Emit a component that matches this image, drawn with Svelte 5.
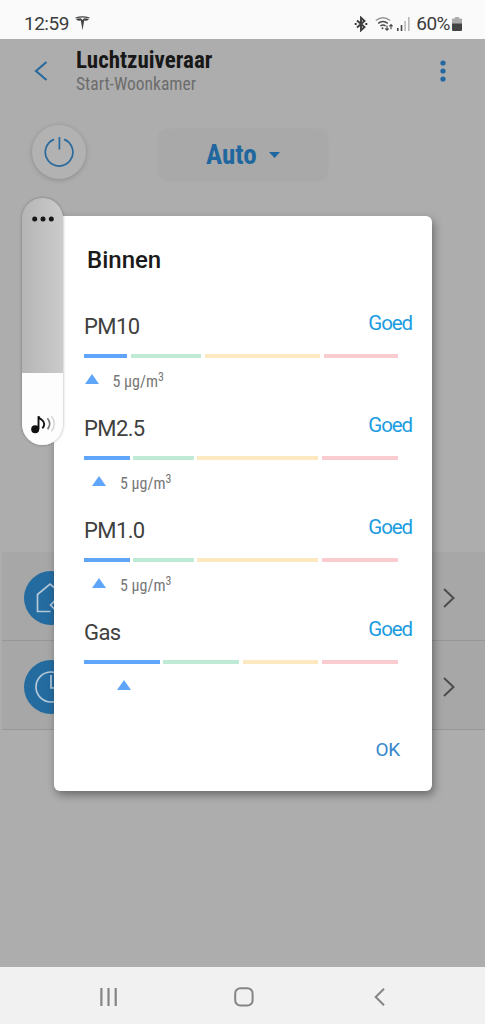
<script lang="ts">
	type Reading = {
		name: string;
		rating: string;
		value: number | null;
		segments: number[];
		marker: number;
	};

	const readings: Reading[] = [
		{ name: 'PM10', rating: 'Goed', value: 5, segments: [43, 70.5, 115.5, 74], marker: 0.5 },
		{ name: 'PM2.5', rating: 'Goed', value: 5, segments: [45.5, 60.5, 121, 76], marker: 8 },
		{ name: 'PM1.0', rating: 'Goed', value: 5, segments: [45.5, 60.5, 121, 76], marker: 8 },
		{ name: 'Gas', rating: 'Goed', value: null, segments: [75.5, 76, 75.5, 76], marker: 32.5 }
	];

	const levels = ['good', 'fair', 'poor', 'bad'];

	let open = $state(true);
</script>

<div class="phone">
	<div class="status-bar">
		<span class="time">12:59</span>
		<svg class="tesla" width="15" height="15" viewBox="0 0 15 15" fill="#444">
			<path d="M.3 1.6Q7.5-1 14.7 1.6L14.2 2.6Q7.5.4.8 2.6Z" />
			<path d="M1.1 3.1Q4 2.1 6.1 2.4L7.5 3.9 8.9 2.4Q11 2.1 13.9 3.1 13 5 10.6 4.7L9.2 4.6 7.5 14.2 5.8 4.6 4.4 4.7Q2 5 1.1 3.1Z" />
		</svg>
		<div class="status-icons">
			<svg width="14" height="16" viewBox="0 0 14 16" fill="none" stroke="#3c3c3c" stroke-width="1.9">
				<path d="M3 4.5 10.5 11 7 14.3V1.7L10.5 5 3 11.5" />
				<path d="M.7 8h2M11.3 8h2" stroke-width="2" />
			</svg>
			<svg width="18" height="16" viewBox="0 0 18 16" fill="none" stroke="#484848" stroke-width="1.5">
				<path d="M.8 4.5Q8 -1 15.2 4.5" stroke="#999" />
				<path d="M3.2 7.4Q8 3.6 12.8 7.4M5.4 10Q8 8 10.6 10" />
				<circle cx="7.5" cy="12.3" r="1" fill="#484848" stroke="none" />
				<path d="M12 9.5V14M10.4 12.5 12 14.2 13.6 12.5M16 13.3V8.8M14.4 10.3 16 8.6 17.6 10.3" stroke-width="1.1" />
			</svg>
			<svg width="13" height="14" viewBox="0 0 13 14">
				<path d="M0 11h1.6v3H0zM3.7 8h1.6v6H3.7z" fill="#444" />
				<path d="M7.3 4h1.6v10H7.3zM11 0h1.6v14H11z" fill="#b8b8b8" />
			</svg>
			<span class="percent">60%</span>
			<svg width="10" height="14" viewBox="0 0 10 14">
				<path d="M3 0h4v1.6h3V7H0V1.6h3z" fill="#ababab" />
				<path d="M0 6.5h10V13q0 1-1 1H1q-1 0-1-1z" fill="#444" />
			</svg>
		</div>
	</div>

	<main class="app">
		<header>
			<svg class="back" width="14" height="20" viewBox="0 0 14 20" fill="none" stroke="#2a6a9c" stroke-width="2.2">
				<path d="M12.5 1 2 10 12.5 19" />
			</svg>
			<div class="heading">
				<h1>Luchtzuiveraar</h1>
				<p>Start-Woonkamer</p>
			</div>
			<svg class="more" width="6" height="22" viewBox="0 0 6 22" fill="#2368a0">
				<circle cx="3" cy="3" r="2.6" />
				<circle cx="3" cy="11" r="2.6" />
				<circle cx="3" cy="19" r="2.6" />
			</svg>
		</header>

		<div class="controls">
			<button class="power" aria-label="power">
				<svg width="30" height="30" viewBox="0 0 30 30" fill="none" stroke="#2a6a9c" stroke-width="1.7">
					<path d="M10.1 2.4A13.8 13.8 0 1 0 20.1 2.4M15.4 0V12.5" />
				</svg>
			</button>
			<button class="mode">
				<span>Auto</span>
				<svg width="11" height="6" viewBox="0 0 11 6"><path d="M0 0H11L5.5 6Z" fill="#20679f" /></svg>
			</button>
		</div>

		<div class="list">
			<div class="item">
				<span class="badge">
					<svg width="32" height="32" viewBox="0 0 32 32" fill="none" stroke="#b4c8d8" stroke-width="1.7">
						<path d="M15.5 29.5H2.5V12.5L15 2 27.5 12.5V17M15.5 23 20 18.5 24.5 23 20 27.5Z" />
					</svg>
				</span>
				<svg class="chevron" width="12" height="20" viewBox="0 0 12 20"><path d="M1 1 10.5 10 1 19" /></svg>
			</div>
			<div class="item">
				<span class="badge">
					<svg width="32" height="32" viewBox="0 0 32 32" fill="none" stroke="#b4c8d8" stroke-width="1.7">
						<circle cx="16" cy="16" r="15" />
						<path d="M16 4V17H25" />
					</svg>
				</span>
				<svg class="chevron" width="12" height="20" viewBox="0 0 12 20"><path d="M1 1 10.5 10 1 19" /></svg>
			</div>
		</div>
	</main>

	<nav>
		<svg width="18" height="18" viewBox="0 0 18 18" stroke="#858585" stroke-width="2.2">
			<path d="M1.4 0V18M8.5 0V18M15.7 0V18" />
		</svg>
		<svg width="20" height="20" viewBox="0 0 20 20" fill="none" stroke="#858585" stroke-width="2">
			<rect x="1.2" y="1.2" width="17.4" height="17.4" rx="5.2" />
		</svg>
		<svg width="11" height="18" viewBox="0 0 11 18" fill="none" stroke="#858585" stroke-width="2">
			<path d="M10 .8 1.7 9 10 17.2" />
		</svg>
	</nav>

	{#if open}
		<div class="dialog" role="dialog" aria-modal="true" aria-labelledby="dialog-title">
			<h2 id="dialog-title">Binnen</h2>
			{#each readings as reading}
				<section>
					<div class="row">
						<span class="name">{reading.name}</span>
						<span class="rating">{reading.rating}</span>
					</div>
					<div class="scale">
						{#each reading.segments as width, i}
							<i class={levels[i]} style="width: {width}px"></i>
						{/each}
					</div>
					<div class="value" style="padding-left: {reading.marker}px">
						<svg width="14" height="10" viewBox="0 0 14 10"><path d="M0 10 7 0 14 10Z" fill="#5fa5fa" /></svg>
						{#if reading.value !== null}
							<span>{reading.value} µg/m<sup>3</sup></span>
						{/if}
					</div>
				</section>
			{/each}
			<button class="ok" onclick={() => (open = false)}>OK</button>
		</div>
	{/if}

	<div class="volume">
		<svg class="dots" width="22" height="6" viewBox="0 0 22 6" fill="#161616">
			<circle cx="2.7" cy="3" r="2.5" />
			<circle cx="11" cy="3" r="2.5" />
			<circle cx="19.3" cy="3" r="2.5" />
		</svg>
		<div class="level">
			<svg width="26" height="19" viewBox="0 0 26 19" fill="none">
				<circle cx="4.2" cy="14.2" r="4" fill="#111" />
				<path d="M7.5 14V1.2C8.5 5 13.2 4.5 13.2 9Q13.2 11.5 11.3 13.2" stroke="#111" stroke-width="1.9" />
				<path d="M16.4 3.3Q20.8 8.6 16.6 14.2" stroke="#777" stroke-width="1.6" />
				<path d="M20.4 1.2Q26.2 8.6 20.4 16.4" stroke="#d5d5d5" stroke-width="1.4" />
			</svg>
		</div>
	</div>
</div>

<style>
	:global(body) {
		margin: 0;
	}
	.phone {
		position: relative;
		display: flex;
		flex-direction: column;
		width: 485px;
		height: 1024px;
		overflow: hidden;
		font-family: Roboto, 'Liberation Sans', sans-serif;
	}
	svg {
		display: block;
		flex: none;
	}
	h1,
	h2,
	p {
		margin: 0;
	}
	button {
		border: 0;
		padding: 0;
		font-family: inherit;
	}

	.status-bar {
		display: flex;
		align-items: center;
		box-sizing: border-box;
		height: 39px;
		padding: 8px 23px 0 24px;
		background: #fafafa;
		color: #3c3c3c;
		font-size: 19px;
		line-height: 22px;
		letter-spacing: -0.5px;
	}
	.time {
		width: 51px;
	}
	.status-icons {
		display: flex;
		align-items: center;
		margin-left: auto;
	}
	.status-icons svg:nth-child(2) {
		margin-left: 7px;
	}
	.status-icons svg:nth-child(3) {
		margin-left: 4px;
	}
	.percent {
		margin: 0 2px 0 6px;
	}

	.app {
		flex: 1;
		background: #adadad;
	}
	header {
		display: flex;
		align-items: flex-start;
		height: 81px;
		padding: 0 39px 0 34px;
		font-stretch: 75%;
	}
	.back {
		margin-top: 22px;
	}
	.heading {
		flex: 1;
		padding: 8px 0 0 28px;
	}
	h1 {
		font-size: 23px;
		line-height: 27px;
		font-weight: 700;
		color: #181818;
	}
	p {
		font-size: 17.5px;
		line-height: 20px;
		color: #6c6c6c;
	}
	.more {
		margin-top: 21px;
	}

	.controls {
		display: flex;
		align-items: center;
		height: 71px;
		padding-left: 32px;
	}
	.power {
		display: flex;
		align-items: center;
		justify-content: center;
		width: 54px;
		height: 54px;
		margin-bottom: 8px;
		border-radius: 50%;
		background: #b2b2b2;
		box-shadow: 0 1px 5px rgba(0, 0, 0, 0.2);
	}
	.mode {
		display: flex;
		align-items: center;
		gap: 12px;
		width: 170px;
		height: 52px;
		margin: 0 0 1px 72px;
		padding-left: 48px;
		border-radius: 10px;
		background: #a9a9a9;
		box-shadow: 0 0 2px #a9a9a9;
		color: #20679f;
		font-size: 27px;
		font-weight: 700;
		font-stretch: 75%;
	}

	.list {
		margin: 361px 0 0 2px;
	}
	.item {
		display: flex;
		align-items: center;
		justify-content: space-between;
		box-sizing: border-box;
		height: 89px;
		padding: 3px 30px 0 22px;
		border-bottom: 1px solid #979797;
		background: #a7a7a7;
	}
	.badge {
		display: flex;
		align-items: center;
		width: 54px;
		height: 54px;
		box-sizing: border-box;
		padding-left: 11px;
		border-radius: 50%;
		background: #246ba0;
	}
	.chevron {
		fill: none;
		stroke: #4d4d4d;
		stroke-width: 2;
	}

	nav {
		display: flex;
		align-items: center;
		justify-content: space-between;
		box-sizing: border-box;
		height: 57px;
		padding: 3px 100px 0;
		background: #f1f1f1;
	}
	nav svg:nth-child(2) {
		margin-right: 5px;
	}

	.dialog {
		position: absolute;
		left: 54px;
		top: 216px;
		display: flex;
		flex-direction: column;
		box-sizing: border-box;
		width: 378px;
		height: 575px;
		padding: 28px 20px 0 30px;
		border-radius: 6px;
		background: #fff;
		box-shadow: 2px 4px 9px rgba(0, 0, 0, 0.38);
	}
	h2 {
		height: 69px;
		padding-left: 3px;
		font-size: 24px;
		line-height: 32px;
		font-weight: 500;
		color: #1a1a1a;
	}
	section {
		height: 102px;
	}
	.row {
		display: flex;
		justify-content: space-between;
		height: 41px;
	}
	.name {
		font-size: 22px;
		line-height: 27px;
		letter-spacing: -0.6px;
		color: #404040;
	}
	.rating {
		font-size: 20.5px;
		line-height: 21px;
		letter-spacing: -1.1px;
		color: #1c9ce0;
	}
	.scale {
		display: flex;
		gap: 3.5px;
		height: 4px;
	}
	.good {
		background: #5fa5fa;
	}
	.fair {
		background: #bfead6;
	}
	.poor {
		background: #fde9c1;
	}
	.bad {
		background: #f9cdd0;
	}
	.value {
		display: flex;
		align-items: center;
		gap: 14px;
		height: 26px;
		padding-top: 11px;
		color: #777;
		font-size: 16px;
		line-height: 20px;
		font-stretch: 85%;
	}
	.value svg {
		margin-bottom: 6px;
	}
	sup {
		font-size: 12px;
		line-height: 0;
	}
	.ok {
		align-self: flex-end;
		margin: 17px 12px 0 0;
		background: none;
		color: #3787cc;
		font-size: 19px;
		line-height: 24px;
		letter-spacing: -0.2px;
	}

	.volume {
		position: absolute;
		left: 22px;
		top: 198px;
		display: flex;
		flex-direction: column;
		align-items: center;
		justify-content: space-between;
		width: 41px;
		height: 247px;
		border-radius: 21px;
		overflow: hidden;
		background: linear-gradient(90deg, #b5b5b5, #cbcbcb);
		box-shadow: 0 0 3px rgba(0, 0, 0, 0.35);
	}
	.dots {
		margin-top: 18px;
	}
	.level {
		box-sizing: border-box;
		width: 100%;
		height: 72px;
		padding: 42px 0 0 9px;
		background: #fdfdfd;
	}
</style>
